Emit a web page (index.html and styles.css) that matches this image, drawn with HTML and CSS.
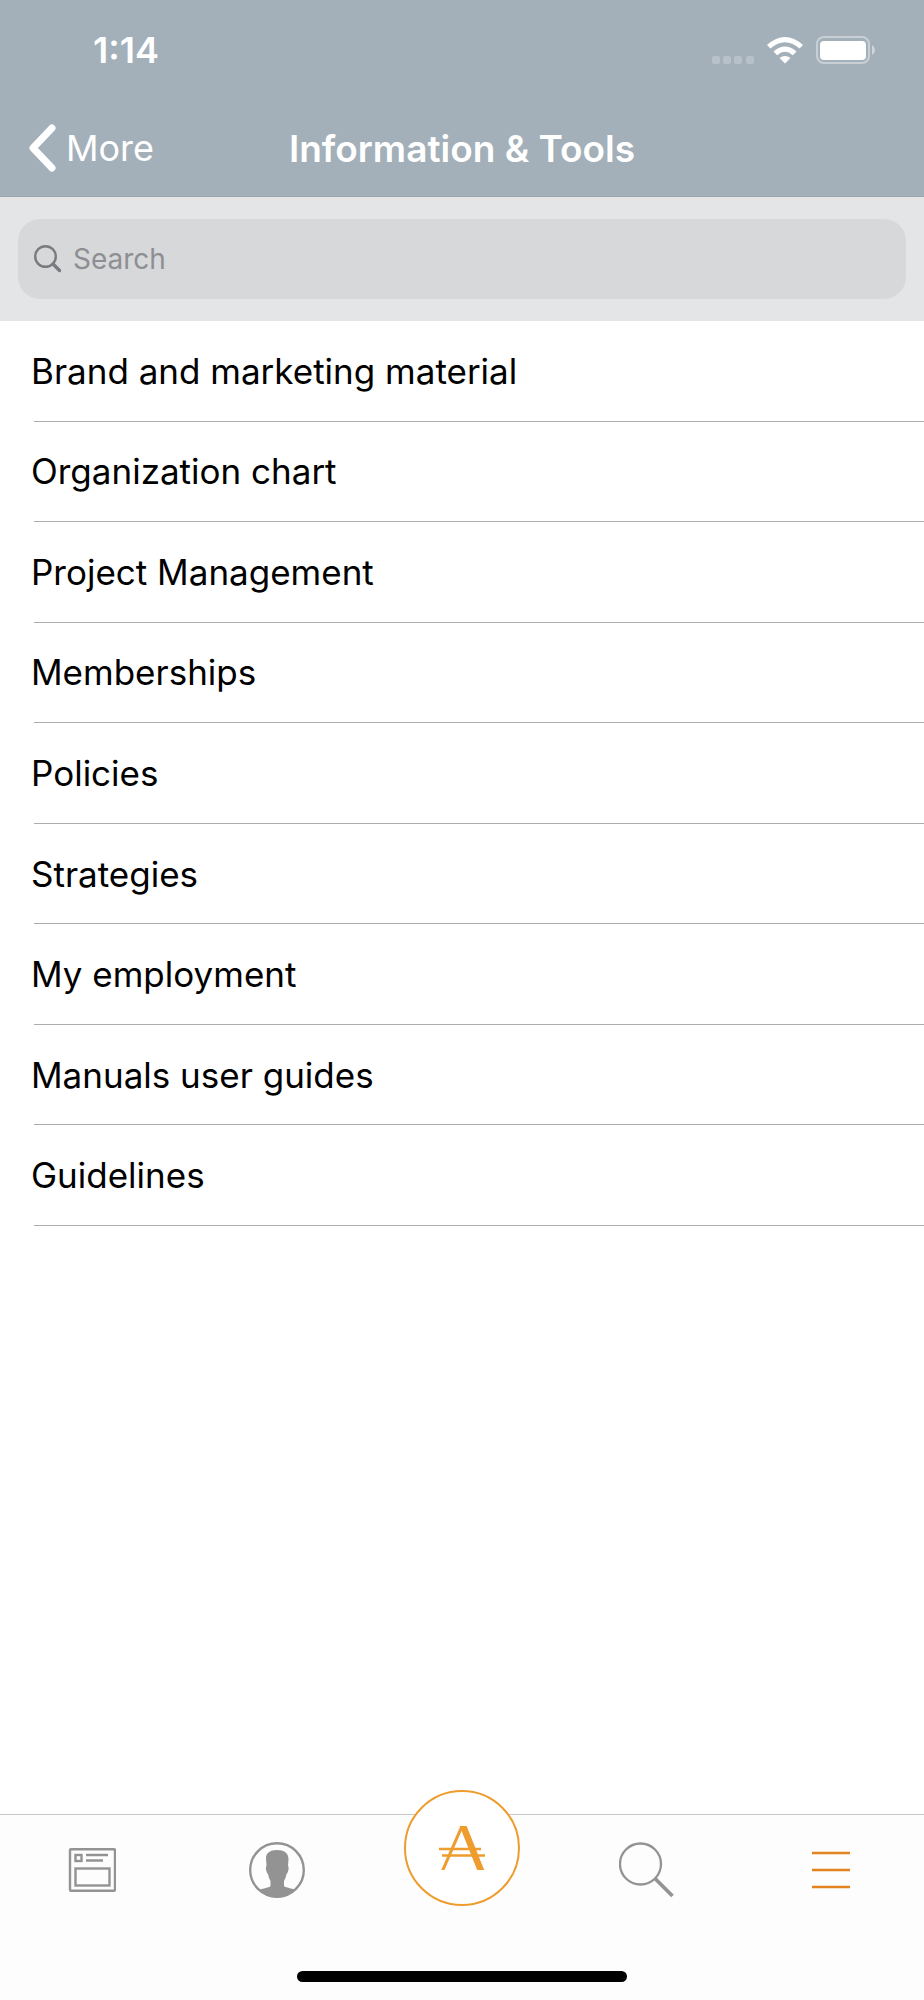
FILE: index.html
```html
<!DOCTYPE html>
<html lang="en">
    <head>
        <meta charset="utf-8">
        <meta name="viewport" content="width=device-width">
        <title>Information &amp; Tools</title>
        <link rel="stylesheet" href="styles.css">
    </head>
    <body>
        <div class="container">
            <header class="header">
                <div class="status">
                    <span class="time">1:14</span>
                    <div class="statusIcons">
                        <svg width="42" height="8" viewBox="0 0 42 8" fill="#b6c1c9" aria-hidden="true">
                            <rect width="8" height="8" rx="2"/>
                            <rect x="11" width="8" height="8" rx="2"/>
                            <rect x="22" width="8" height="8" rx="2"/>
                            <rect x="34" width="8" height="8" rx="2"/>
                        </svg>
                        <svg width="36" height="27" viewBox="0 0 36 27" fill="#fff" aria-hidden="true">
                            <path d="M0 8 Q18 -8 36 8 L32.500 11.500 Q18 -1 3.500 11.500 Z"/>
                            <path d="M6.500 14.500 Q18 4.500 29.500 14.500 L25.800 18.200 Q18 11.500 10.200 18.200 Z"/>
                            <path d="M12.500 21 Q18 17 23.500 21 L18 26.500 Z"/>
                        </svg>
                        <svg width="60" height="28" viewBox="0 0 60 28" aria-hidden="true">
                            <rect x="1" y="1" width="52" height="26" rx="7" fill="none" stroke="#c8d0d5" stroke-width="2"/>
                            <rect x="4" y="5" width="46" height="19" rx="4" fill="#fff"/>
                            <path d="M56 9 Q59 11 59 14 Q59 17 56 19 Z" fill="#d0d7db"/>
                        </svg>
                    </div>
                </div>
                <nav class="navbar">
                    <a class="back" href="#more">
                        <svg width="28" height="48" viewBox="0 0 28 48" fill="none" stroke="#fff" stroke-width="7" stroke-linecap="round" stroke-linejoin="round" aria-hidden="true">
                            <path d="M24 4 L5 24 L24 44"/>
                        </svg>
                        More
                    </a>
                    <h1 class="title">Information &amp; Tools</h1>
                </nav>
            </header>
            <form class="search">
                <label class="searchField">
                    <svg width="28" height="28" viewBox="0 0 28 28" fill="none" stroke="#7b7b7f" stroke-linecap="round" aria-hidden="true">
                        <circle cx="11.500" cy="11.500" r="10.300" stroke-width="2.400"/>
                        <path d="M19 19 L25.500 25.500" stroke-width="3.400"/>
                    </svg>
                    <input type="search" placeholder="Search" aria-label="Search">
                </label>
            </form>
            <ul class="list">
                <li><a class="Link" href="#brand">Brand and marketing material</a></li>
                <li><a class="Link" href="#organization">Organization chart</a></li>
                <li><a class="Link" href="#project">Project Management</a></li>
                <li><a class="Link" href="#memberships">Memberships</a></li>
                <li><a class="Link" href="#policies">Policies</a></li>
                <li><a class="Link" href="#strategies">Strategies</a></li>
                <li><a class="Link" href="#employment">My employment</a></li>
                <li><a class="Link" href="#manuals">Manuals user guides</a></li>
                <li><a class="Link" href="#guidelines">Guidelines</a></li>
            </ul>
            <footer class="footer">
                <nav class="tabs">
                    <a class="tab" href="#news" aria-label="News">
                        <svg width="48" height="44" viewBox="0 0 48 44" fill="none" stroke="#939393" stroke-width="2.400">
                            <rect x="2" y="1.200" width="45" height="41.500" rx="1"/>
                            <rect x="7.500" y="7" width="6" height="6"/>
                            <path d="M18 7 H40 M18 12.500 H35"/>
                            <rect x="7.500" y="20.500" width="34" height="17"/>
                        </svg>
                    </a>
                    <a class="tab" href="#profile" aria-label="Profile">
                        <svg width="56" height="56" viewBox="0 0 56 56">
                            <circle cx="28" cy="28" r="26.800" fill="none" stroke="#939393" stroke-width="2.400"/>
                            <path d="M28 8 C35 8 39.500 11 39.500 17 L39 24 C40.500 25 39 31 37.500 32 C37 35 36 37 35 39 L35 44 C37 46 43 46 46 48 C36 58 20 58 11 48 C14 46 20 46 21.500 44 L21.500 39 C20.500 37 19.500 35 19 32 C17.500 31 16 25 17.500 24 L17 16 C17 11 21 8 28 8 Z" fill="#939393"/>
                        </svg>
                    </a>
                    <a class="tab" href="#home" aria-label="Home">
                        <span class="homeCircle">
                            <svg width="48" height="44" viewBox="0 0 48 44" stroke="#ee9c2e">
                                <line x1="25.400" y1="-3" x2="4" y2="46" stroke-width="3"/>
                                <line x1="23.100" y1="-5" x2="43.900" y2="47" stroke-width="6.500"/>
                                <line x1="1" y1="23" x2="43" y2="23" stroke-width="2.400"/>
                                <line x1="4" y1="29.500" x2="47" y2="29.500" stroke-width="2.400"/>
                            </svg>
                        </span>
                    </a>
                    <a class="tab" href="#search" aria-label="Search">
                        <svg width="56" height="56" viewBox="0 0 56 56" fill="none" stroke="#939393">
                            <circle cx="21.500" cy="22" r="20.500" stroke-width="2.300"/>
                            <path d="M36 36.500 L53.500 54" stroke-width="3.800"/>
                        </svg>
                    </a>
                    <a class="tab" href="#menu" aria-label="More">
                        <svg width="40" height="38" viewBox="0 0 40 38" stroke="#e48420" stroke-width="2.600">
                            <path d="M0 2 H38 M0 19 H38 M0 36 H38"/>
                        </svg>
                    </a>
                </nav>
                <div class="homeBar"></div>
            </footer>
        </div>
    </body>
</html>
```
FILE: styles.css
```css
html,body {
    margin: 0;
}
body {
    font-family: Inter, "Liberation Sans", sans-serif;
    color: #000;
    background-color: #fff;
}
.container {
    display: flex;
    flex-direction: column;
    min-height: 100vh;
}
/* header */
.header {
    color: #fff;
    background-color: #a3b0b9;
}
.status {
    display: flex;
    justify-content: space-between;
    align-items: center;
    height: 100px;
    padding: 0 48px 0 93px;
}
.time {
    font-size: 36px;
    font-weight: 600;
}
.statusIcons {
    display: flex;
    align-items: flex-end;
    gap: 13px;
}
.navbar {
    display: grid;
    grid-template-columns: 1fr auto 1fr;
    align-items: center;
    height: 96px;
    padding: 0 28px;
    border-bottom: 1px solid #9ba7af;
}
.back {
    display: flex;
    align-items: center;
    gap: 10px;
    font-size: 36px;
    color: #fff;
    text-decoration: none;
}
.title {
    margin: 0;
    font-size: 37px;
    font-weight: 600;
}
/* search */
.search {
    padding: 22px 18px;
    background-color: #e4e5e7;
}
.searchField {
    display: flex;
    align-items: center;
    gap: 11px;
    height: 80px;
    padding: 0 16px;
    border-radius: 22px;
    background-color: #d7d8da;
}
.searchField input {
    flex: 1;
    padding: 0;
    border: 0;
    outline: 0;
    background: none;
    font-family: inherit;
    font-size: 28px;
}
.searchField input::placeholder {
    color: #8e8e93;
}
/* list */
.list {
    display: grid;
    grid-auto-rows: 1fr;
    min-height: 905px;
    margin: 0;
    padding: 0 0 0 34px;
    list-style: none;
}
.list li {
    display: grid;
    border-bottom: 1px solid #adadad;
}
.Link {
    display: flex;
    align-items: center;
    margin-left: -3px;
    font-size: 35px;
    color: #000;
    text-decoration: none;
}
/* bottom tabs */
.footer {
    margin-top: auto;
    padding-bottom: 18px;
    border-top: 1px solid #c8c8c8;
    background-color: #fdfdfd;
}
.tabs {
    display: grid;
    grid-template-columns: repeat(5, 1fr);
    height: 110px;
}
.tab {
    display: flex;
    justify-content: center;
    align-items: center;
}
/* sits over the top border of the tabs */
.homeCircle {
    display: flex;
    justify-content: center;
    align-items: center;
    box-sizing: border-box;
    width: 116px;
    height: 116px;
    margin-top: -44px;
    border: 2px solid #ee9c2e;
    border-radius: 50%;
    background-color: #fff;
}
.homeBar {
    width: 330px;
    height: 11px;
    margin: 46px auto 0;
    border-radius: 6px;
    background-color: #000;
}
```
